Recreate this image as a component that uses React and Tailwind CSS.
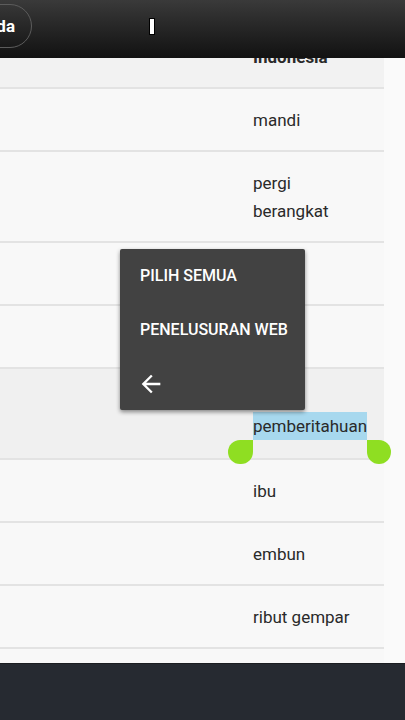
const rows = [
  { lines: ['mandi'] },
  { lines: ['pergi', 'berangkat'] },
  { lines: [''] },
  { lines: [''] },
  { lines: ['', 'pemberitahuan'], selected: true },
  { lines: ['ibu'] },
  { lines: ['embun'] },
  { lines: ['ribut gempar'] },
  { lines: [''] },
];

function Row({ row }) {
  return (
    <div
      className={`flex border-b-2 border-[#e3e3e3] py-[16.5px] pl-[253px] ${
        row.selected ? 'bg-[#f0f0f0]' : 'bg-[#f8f8f8]'
      }`}
    >
      <div className="flex flex-col">
        {row.lines.map((l, i) =>
          row.selected && l ? (
            <div key={i} className="h-[28px]">
              <span className="relative top-[-2px] inline-block bg-[#a7d8ee]">
                {l}
                {/* selection handles */}
                <span className="absolute left-[-25px] top-full h-[24px] w-[25px] rounded-full rounded-tr-none bg-[#8fde22]" />
                <span className="absolute right-[-24px] top-full h-[24px] w-[24px] rounded-full rounded-tl-none bg-[#8fde22]" />
              </span>
            </div>
          ) : (
            <div key={i} className="h-[28px]">{l || '\u00a0'}</div>
          )
        )}
      </div>
    </div>
  );
}

export default function App() {
  return (
    <div
      className="relative flex h-[720px] w-[405px] flex-col overflow-hidden bg-[#fafafa] text-[17px] leading-[28px] text-[#2a2a2a]"
      style={{ fontFamily: 'Roboto, "Noto Sans", sans-serif' }}
    >
      {/* Top bar */}
      <div className="z-10 flex h-[58px] shrink-0 items-start bg-linear-to-b from-[#3a3a3a] to-[#121212]">
        <div className="-ml-[24px] mt-[4px] flex h-[44px] w-[56px] items-center justify-end rounded-full border border-[#5c5c5c] pr-[16px] text-[17px] font-bold text-white">
          da
        </div>
        <div className="ml-[117px] mt-[18px] h-[17px] w-[6px] border border-black bg-white" />
      </div>

      {/* Table */}
      <div className="relative flex-1 overflow-hidden">
        <div className="-mt-[32px] w-[384px]">
          <div className="border-b-2 border-[#e3e3e3] bg-[#f2f2f2] py-[16.5px] pl-[253px] font-bold">
            <div className="h-[28px]">Indonesia</div>
          </div>
          {rows.map((r, i) => (
            <Row key={i} row={r} />
          ))}
        </div>
      </div>

      {/* Footer */}
      <div className="h-[57px] shrink-0 border-t border-[#1b1d21] bg-[#262a31]" />

      {/* Context menu */}
      <div className="absolute left-[120px] top-[249px] flex w-[185px] flex-col rounded-[2px] bg-[#424242] pl-[20px] text-[16px] font-medium text-white shadow-[0_2px_4px_rgba(0,0,0,0.45)]">
        <div className="flex h-[54px] items-center">PILIH SEMUA</div>
        <div className="flex h-[54px] items-center">PENELUSURAN WEB</div>
        <div className="flex h-[53px] items-center">
          <svg className="-ml-[3px]" width="28" height="28" viewBox="0 0 24 24" fill="white">
            <path d="M20 11H7.83l5.59-5.59L12 4l-8 8 8 8 1.41-1.41L7.83 13H20v-2z" />
          </svg>
        </div>
      </div>
    </div>
  );
}
